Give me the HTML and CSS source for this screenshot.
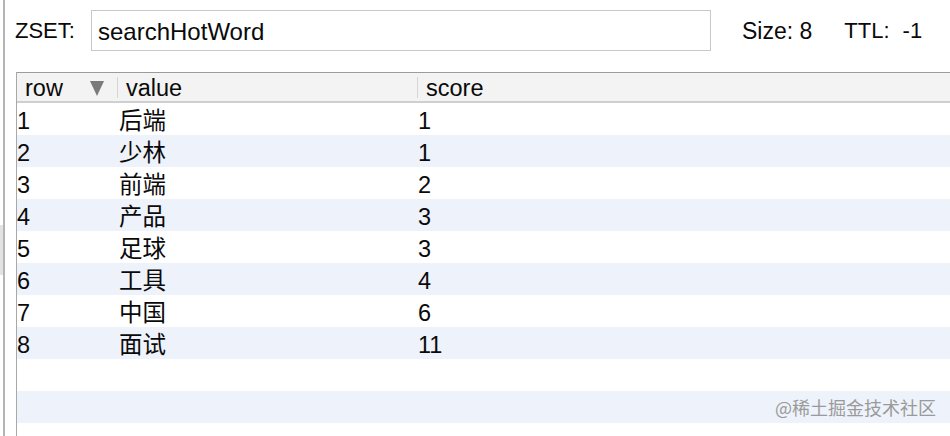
FILE: index.html
```html
<!DOCTYPE html>
<html>
<head>
<meta charset="utf-8">
<link rel="stylesheet" href="styles.css">
</head>
<body>
<div class="app">
  <div class="gutter"><div class="grip"></div></div>
  <div class="main">
    <div class="topbar">
      <span class="label">ZSET:</span>
      <div class="keyinput">searchHotWord</div>
      <span class="meta size">Size: 8</span>
      <span class="meta ttl">TTL:</span>
      <span class="meta ttlval">-1</span>
    </div>
    <div class="table">
      <div class="thead">
        <div class="th c1">row<span class="sort"></span></div>
        <div class="th c2">value</div>
        <div class="th c3">score</div>
      </div>
      <div class="tr"><div class="td c1">1</div><div class="td c2">后端</div><div class="td c3">1</div></div>
      <div class="tr alt"><div class="td c1">2</div><div class="td c2">少林</div><div class="td c3">1</div></div>
      <div class="tr"><div class="td c1">3</div><div class="td c2">前端</div><div class="td c3">2</div></div>
      <div class="tr alt"><div class="td c1">4</div><div class="td c2">产品</div><div class="td c3">3</div></div>
      <div class="tr"><div class="td c1">5</div><div class="td c2">足球</div><div class="td c3">3</div></div>
      <div class="tr alt"><div class="td c1">6</div><div class="td c2">工具</div><div class="td c3">4</div></div>
      <div class="tr"><div class="td c1">7</div><div class="td c2">中国</div><div class="td c3">6</div></div>
      <div class="tr alt"><div class="td c1">8</div><div class="td c2">面试</div><div class="td c3">11</div></div>
      <div class="tr"></div>
      <div class="tr alt"><span class="watermark">@稀土掘金技术社区</span></div>
      <div class="tr"></div>
    </div>
  </div>
</div>
</body>
</html>
```

FILE: styles.css
```css
html, body {
  margin: 0;
  padding: 0;
  background: #ffffff;
}
body {
  width: 950px;
  height: 436px;
  overflow: hidden;
  font-family: "Liberation Sans", Arial, "Noto Sans CJK SC", sans-serif;
  color: #0a0a0a;
}
.app {
  display: flex;
  height: 436px;
}
.gutter {
  width: 3px;
  border-right: 2px solid #b4b4b4;
  flex: none;
}
.grip {
  margin-top: 225px;
  height: 50px;
  background: #e2e2e2;
}
.main {
  flex: 1;
  min-width: 0;
  overflow: hidden;
}
.topbar {
  display: flex;
  align-items: center;
  height: 72px;
  padding: 10px 0 20px 10px;
  box-sizing: border-box;
  font-size: 22px;
}
.label {
  width: 76px;
}
.keyinput {
  width: 620px;
  height: 41px;
  margin-top: -2px;
  box-sizing: border-box;
  border: 1px solid #c8c8c8;
  padding-left: 6px;
  line-height: 42px;
  font-size: 24px;
}
.meta.size {
  margin-left: 31px;
  font-size: 23px;
}
.meta.ttl {
  margin-left: 32px;
}
.meta.ttlval {
  margin-left: 13px;
}
.table {
  margin-left: 11px;
  border-left: 1px solid #a8a8a8;
  width: 960px;
  font-size: 23.5px;
}
.thead {
  display: flex;
  height: 28px;
  background: #f3f3f3;
  border-top: 1px solid #9c9c9c;
  border-bottom: 2px solid #cfcfcf;
}
.th {
  position: relative;
  height: 28px;
  line-height: 30px;
  box-sizing: border-box;
}
.th.c1 {
  width: 100px;
  padding-left: 8px;
}
.th.c2, .th.c3 {
  padding-left: 9px;
}
.th.c2::before, .th.c3::before {
  content: "";
  position: absolute;
  left: 0;
  top: 4px;
  bottom: 3px;
  width: 1px;
  background: #d6d6d6;
}
.th.c2 {
  width: 300px;
}
.sort {
  position: absolute;
  left: 73px;
  top: 8px;
  width: 0;
  height: 0;
  border-left: 7px solid transparent;
  border-right: 7px solid transparent;
  border-top: 15px solid #7a7a7a;
}
.tr {
  display: flex;
  height: 32px;
}
.tr.alt {
  background: #eef2fb;
}
.td {
  padding-top: 2px;
  line-height: 32px;
  height: 32px;
  box-sizing: border-box;
}
.td.c1 {
  width: 100px;
  padding-left: 0;
}
.td.c2 {
  width: 300px;
  padding-left: 2px;
}
.td.c3 {
  padding-left: 1px;
}
.watermark {
  margin-left: 758px;
  line-height: 32px;
  font-size: 18px;
  color: #9a9a9a;
  font-family: "Noto Sans CJK SC", sans-serif;
}
```
